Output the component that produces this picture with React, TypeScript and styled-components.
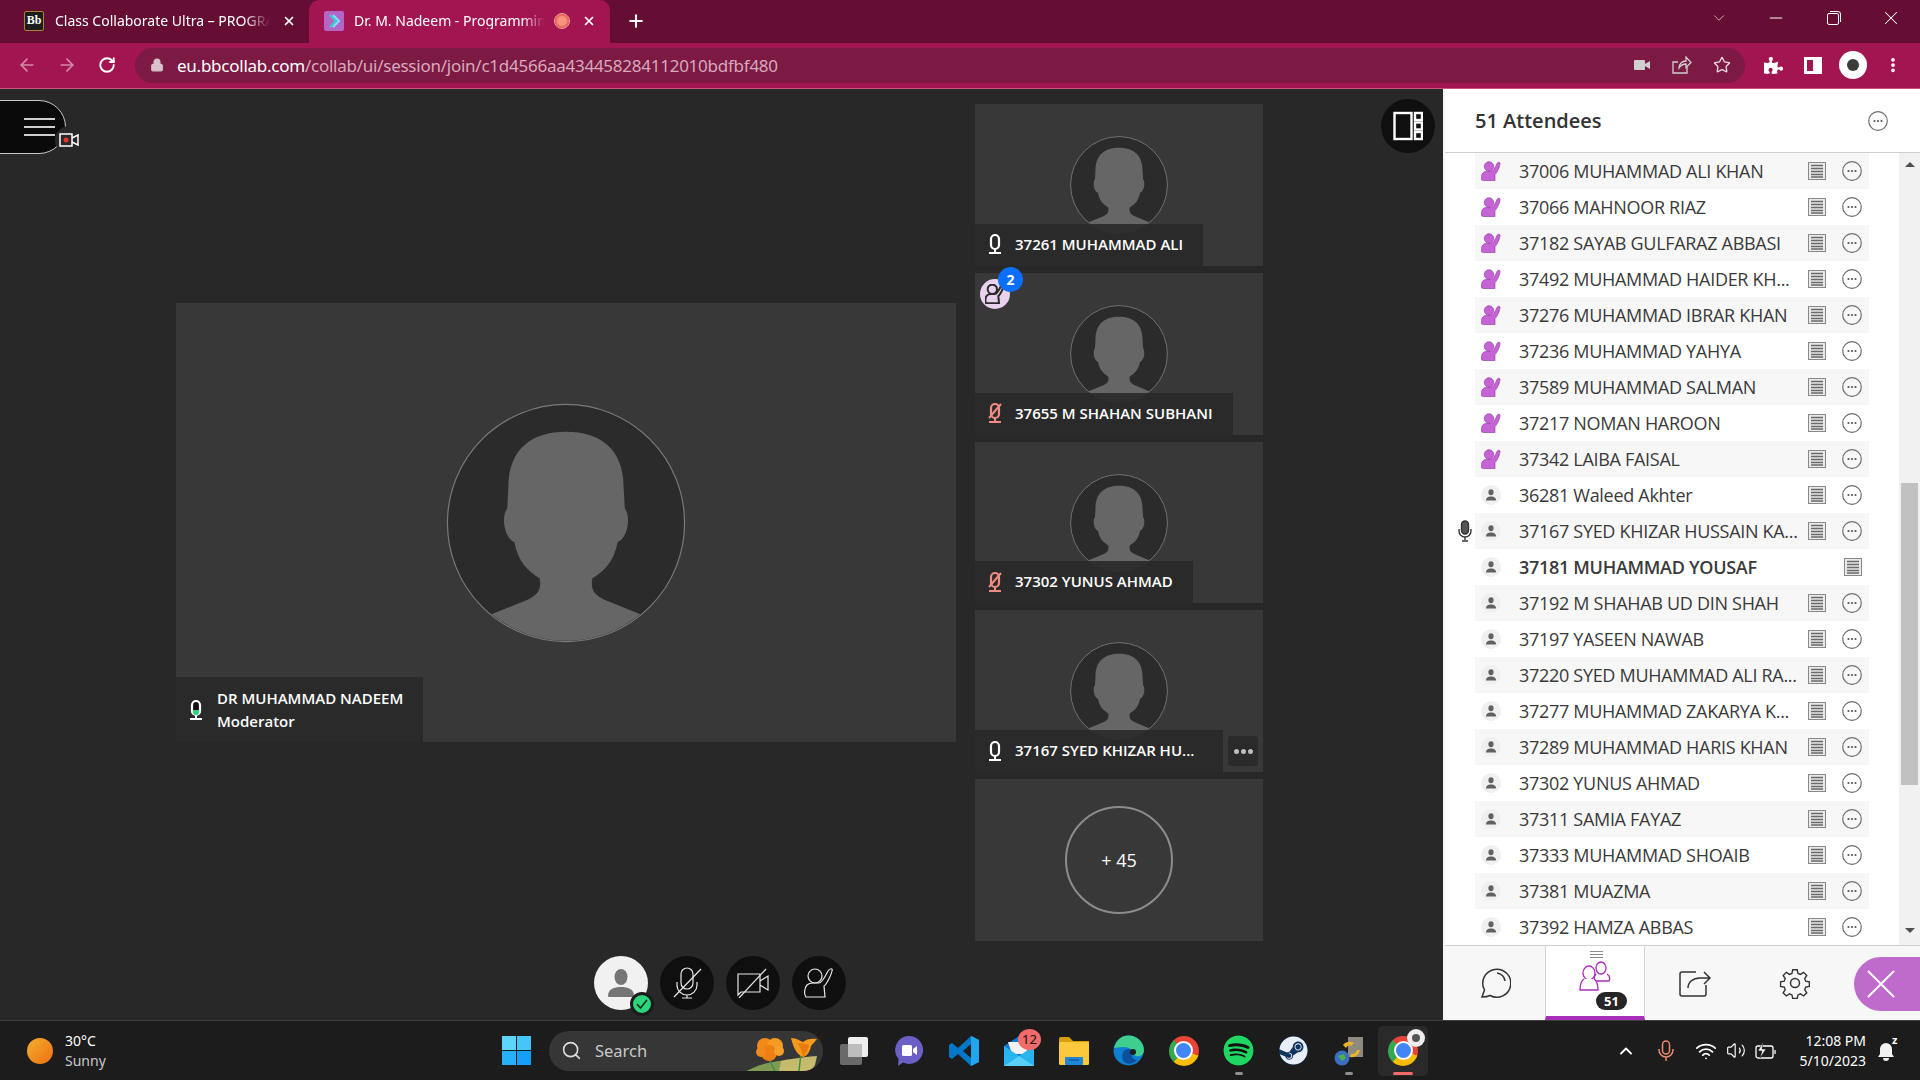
import React from 'react'
import styled, { createGlobalStyle } from 'styled-components'
import { ArrowLeft, ArrowRight, RotateCw, Lock, Star, X, Plus, Minus, ChevronDown, ChevronUp, Search, MoreVertical, Wifi, Volume2 } from 'lucide-react'
import { FaPuzzlePiece, FaSpotify, FaSteam } from 'react-icons/fa'

const GlobalStyle = createGlobalStyle`
  html, body {
    margin: 0;
    padding: 0;
    background: #282828;
    overflow: hidden;
  }
  #root {
    width: 1920px;
    height: 1080px;
  }
  * {
    box-sizing: border-box;
  }
`

const Page = styled.div`
  display: flex;
  flex-flow: column nowrap;
  width: 1920px;
  height: 1080px;
  font-family: 'Open Sans', 'Liberation Sans', sans-serif;
`

/* browser chrome */
const TabStrip = styled.div`
  display: flex;
  align-items: stretch;
  height: 43px;
  flex: none;
  padding-bottom: 0;
  background: #650d33;
  color: #fff;
  font-family: 'Noto Sans', 'Liberation Sans', sans-serif;
  font-size: 14px;
  line-height: 17px;
`

const Tab = styled.div<{ $active?: boolean }>`
  position: relative;
  display: flex;
  align-items: center;
  width: ${({ $active }) => ($active ? '301px' : '309px')};
  padding-left: ${({ $active }) => ($active ? '15px' : '24px')};
  padding-bottom: 2px;
  background: ${({ $active }) => ($active ? '#a31550' : 'transparent')};
  border-radius: 10px 10px 0 0;
`

const Favicon = styled.div<{ $kind: 'bb' | 'class' }>`
  flex: none;
  display: flex;
  align-items: center;
  justify-content: center;
  width: 20px;
  height: 20px;
  border-radius: 2px;
  font-family: 'Liberation Serif', serif;
  font-size: 12px;
  font-weight: 700;
  color: #fff;
  background: ${({ $kind }) => ($kind === 'bb' ? '#1d1d1d' : '#b565c8')};
  border: ${({ $kind }) => ($kind === 'bb' ? '1px solid #a8842c' : 'none')};
`

const TabTitle = styled.span<{ $width: number; $left: number }>`
  flex: none;
  width: ${({ $width }) => $width}px;
  margin-left: ${({ $left }) => $left}px;
  white-space: nowrap;
  mask-image: linear-gradient(to right, #000 88%, transparent);
`

const AudioDot = styled.div`
  flex: none;
  width: 14px;
  height: 14px;
  margin-left: 10px;
  border-radius: 50%;
  background: #f4947c;
  border: 2px solid #ec6a5e;
  outline: 1px solid #f4a797;
`

const TabClose = styled.div<{ $left: number }>`
  display: flex;
  margin-left: ${({ $left }) => $left}px;
`

const NewTab = styled.div`
  display: flex;
  align-items: center;
  margin-left: 16px;
  padding-bottom: 2px;
`

const WindowButtons = styled.div`
  display: flex;
  margin-left: auto;
`

const WindowButton = styled.div`
  display: flex;
  align-items: center;
  justify-content: center;
  width: 57.5px;
  height: 36px;
  color: #fff;
`

const Toolbar = styled.div`
  display: flex;
  align-items: center;
  flex: none;
  height: 46px;
  padding: 0 0 1px 7px;
  background: #a31550;
  border-bottom: 1px solid #c9567f;
`

const ToolButton = styled.div<{ $dim?: boolean }>`
  display: flex;
  align-items: center;
  justify-content: center;
  width: 40px;
  height: 36px;
  flex: none;
  color: ${({ $dim }) => ($dim ? '#d58aa8' : '#fff')};
`

const UrlBox = styled.div`
  display: flex;
  align-items: center;
  width: 1610px;
  height: 35px;
  margin: 0 8px;
  padding-left: 15px;
  padding-right: 3px;
  border-radius: 18px;
  background: #7c1a43;
  font-family: 'Noto Sans', 'Liberation Sans', sans-serif;
  font-size: 17px;
  letter-spacing: -0.25px;
`

const UrlText = styled.span`
  margin-left: 13px;
  color: #d9a9bd;
  white-space: nowrap;
  b {
    font-weight: 400;
    color: #fff;
  }
`

const UrlActions = styled.div`
  display: flex;
  margin-left: auto;
`

const ProfileDot = styled.div`
  width: 28px;
  height: 28px;
  border-radius: 50%;
  background: #fff;
  display: flex;
  align-items: center;
  justify-content: center;
  &::after {
    content: '';
    width: 12px;
    height: 12px;
    border-radius: 50%;
    background: #3c3c3c;
  }
`

const SidebarGlyph = styled.div`
  width: 18px;
  height: 17px;
  border: 3px solid #fff;
  border-right-width: 9px;
`

/* session */
const Session = styled.div`
  display: flex;
  flex: 1;
  min-height: 0;
`

const Stage = styled.div`
  position: relative;
  width: 1443px;
  flex: none;
  display: flex;
  flex-flow: column nowrap;
  padding-top: 15px;
  background: #282828;
`

const MenuButton = styled.div`
  position: absolute;
  left: -1px;
  top: 11px;
  width: 67px;
  height: 54px;
  display: flex;
  flex-flow: column nowrap;
  justify-content: center;
  align-items: flex-end;
  gap: 6px;
  padding-right: 10px;
  background: #0a0a0a;
  border: 1px solid #c8c8c8;
  border-radius: 0 27px 27px 0;
`

const MenuLine = styled.span`
  width: 31px;
  height: 2px;
  background: #cfcfcf;
`

const RecordBadge = styled.div`
  position: absolute;
  left: 55px;
  top: 37px;
  width: 28px;
  height: 28px;
  border-radius: 50%;
  background: #282828;
  display: flex;
  align-items: center;
  justify-content: center;
`

const LayoutToggle = styled.div`
  position: absolute;
  right: 8px;
  top: 10px;
  width: 54px;
  height: 54px;
  border-radius: 50%;
  background: #0f0f0f;
  display: flex;
  align-items: center;
  justify-content: center;
`

const VideoArea = styled.div`
  display: flex;
  gap: 19px;
  padding-left: 176px;
`

const MainVideo = styled.div`
  position: relative;
  width: 780px;
  height: 439px;
  margin-top: 199px;
  background: #383838;
  display: flex;
  align-items: center;
  justify-content: center;
`

const TileColumn = styled.div`
  display: flex;
  flex-flow: column nowrap;
  gap: 7px;
`

const Tile = styled.div`
  position: relative;
  width: 288px;
  height: 161.75px;
  padding-top: 32px;
  background: #383838;
  display: flex;
  justify-content: center;
`

const MoreTile = styled(Tile)`
  padding-top: 0;
  align-items: center;
`

const MoreCircle = styled.div`
  width: 108px;
  height: 108px;
  border-radius: 50%;
  border: 2px solid #8c8c8c;
  display: flex;
  align-items: center;
  justify-content: center;
  color: #fff;
  font-size: 18px;
`

const NameBar = styled.div<{ $width: number; $tall?: boolean }>`
  position: absolute;
  left: 0;
  bottom: 0;
  width: ${({ $width }) => $width}px;
  height: ${({ $tall }) => ($tall ? '65px' : '42px')};
  display: flex;
  align-items: center;
  gap: ${({ $tall }) => ($tall ? '11px' : '10px')};
  padding: 0 0 ${({ $tall }) => ($tall ? '0' : '1px')} 10px;
  background: rgba(40, 40, 40, 0.88);
  color: #fff;
  font-size: 15px;
  font-weight: 600;
  line-height: 23px;
  white-space: nowrap;
`

const TileMore = styled.div`
  position: absolute;
  right: 5px;
  bottom: 6px;
  width: 30px;
  height: 30px;
  border-radius: 3px;
  background: #2a2a2a;
  display: flex;
  align-items: center;
  justify-content: center;
  gap: 2px;
`

const TileMoreDot = styled.span`
  width: 5px;
  height: 5px;
  border-radius: 50%;
  background: #bdbdbd;
`

const HandBadge = styled.div`
  position: absolute;
  left: 5px;
  top: 6px;
  width: 30px;
  height: 30px;
  border-radius: 50%;
  background: #e8d2ee;
  display: flex;
  align-items: center;
  justify-content: center;
`

const HandCount = styled.div`
  position: absolute;
  left: 18px;
  top: -12px;
  width: 25px;
  height: 25px;
  border-radius: 50%;
  background: #0b6efd;
  color: #fff;
  font-size: 14px;
  font-weight: 700;
  display: flex;
  align-items: center;
  justify-content: center;
`

const Controls = styled.div`
  display: flex;
  justify-content: center;
  gap: 12px;
  margin-top: 15px;
  padding-right: 3px;
`

const ControlButton = styled.div`
  position: relative;
  width: 54px;
  height: 54px;
  border-radius: 50%;
  background: #0f0f0f;
  display: flex;
  align-items: center;
  justify-content: center;
`

const SelfButton = styled(ControlButton)`
  background: #f1f1f1;
`

const StatusBadge = styled.div`
  position: absolute;
  right: -6px;
  bottom: -6px;
  width: 24px;
  height: 24px;
  border-radius: 50%;
  background: #2ed47a;
  border: 3px solid #1b1b1b;
  display: flex;
  align-items: center;
  justify-content: center;
`

/* attendees panel */
const Panel = styled.div`
  flex: 1;
  display: flex;
  flex-flow: column nowrap;
  background: #fff;
  border-left: 2px solid #f4f4f4;
`

const PanelHeader = styled.div`
  flex: none;
  height: 64px;
  display: flex;
  align-items: center;
  justify-content: space-between;
  padding: 0 32px 0 30px;
  border-bottom: 1px solid #cfcfcf;
`

const PanelTitle = styled.div`
  font-size: 20px;
  font-weight: 600;
  color: #333;
`

const PanelBody = styled.div`
  flex: 1;
  display: flex;
  min-height: 0;
  justify-content: space-between;
  padding-left: 30px;
`

const AttendeeList = styled.div`
  width: 394px;
`

const Row = styled.div<{ $shade: boolean }>`
  position: relative;
  height: 36px;
  display: flex;
  align-items: center;
  padding: 0 7px 0 6px;
  background: ${({ $shade }) => ($shade ? '#f7f7f7' : '#fff')};
`

const RoleCircle = styled.div`
  width: 20px;
  height: 20px;
  flex: none;
  border-radius: 50%;
  background: #f0f0f0;
  display: flex;
  align-items: center;
  justify-content: center;
`

const RaisedHand = styled.div`
  width: 20px;
  height: 20px;
  flex: none;
`

const SpeakingMic = styled.div`
  position: absolute;
  left: -17px;
  top: 7px;
`

const AttendeeName = styled.div<{ $bold?: boolean }>`
  flex: 1;
  margin-left: 18px;
  font-size: 18px;
  font-weight: ${({ $bold }) => ($bold ? 600 : 400)};
  color: #3a3a3a;
  white-space: nowrap;
  letter-spacing: -0.3px;
`

const RowActions = styled.div`
  display: flex;
  align-items: center;
  gap: 16px;
`

const Scrollbar = styled.div`
  width: 21px;
  flex: none;
  background: #f1f1f1;
  display: flex;
  flex-flow: column nowrap;
  align-items: center;
  padding-top: 9px;
`

const ScrollThumb = styled.div`
  width: 17px;
  height: 302px;
  margin-top: 316px;
  background: #c1c1c1;
`

const ArrowUp = styled.div`
  width: 0;
  height: 0;
  border-left: 5px solid transparent;
  border-right: 5px solid transparent;
  border-bottom: 5px solid #505050;
`

const ArrowDown = styled.div`
  width: 0;
  height: 0;
  margin-top: 143px;
  border-left: 5px solid transparent;
  border-right: 5px solid transparent;
  border-top: 5px solid #505050;
`

const PanelTabs = styled.div`
  flex: none;
  height: 75px;
  display: flex;
  background: #f7f7f7;
  border-top: 1px solid #cfcfcf;
`

const PanelTab = styled.div<{ $active?: boolean }>`
  position: relative;
  width: 100px;
  display: flex;
  align-items: center;
  justify-content: center;
  background: ${({ $active }) => ($active ? '#fff' : 'transparent')};
  border-left: ${({ $active }) => ($active ? '1px solid #d4d4d4' : 'none')};
  border-right: ${({ $active }) => ($active ? '1px solid #d4d4d4' : 'none')};
  border-bottom: ${({ $active }) => ($active ? '4px solid #a92ebc' : 'none')};
`

const DragHandle = styled.div`
  position: absolute;
  left: 44px;
  top: 5px;
  width: 13px;
  height: 7px;
  border-top: 1px solid #8c8c8c;
  border-bottom: 1px solid #8c8c8c;
  &::after {
    content: '';
    display: block;
    margin-top: 2px;
    height: 1px;
    background: #8c8c8c;
  }
`

const CountBadge = styled.div`
  position: absolute;
  left: 50px;
  top: 46px;
  width: 31px;
  height: 18px;
  border-radius: 9px;
  background: #262626;
  color: #fff;
  font-size: 13px;
  font-weight: 700;
  display: flex;
  align-items: center;
  justify-content: center;
`

const ClosePanel = styled.div`
  width: 66px;
  height: 54px;
  margin: 11px 0 0 auto;
  padding-right: 12px;
  background: #bf6bcc;
  border-radius: 27px 0 0 27px;
  display: flex;
  align-items: center;
  justify-content: center;
  color: #fff;
`

/* taskbar */
const Taskbar = styled.div`
  flex: none;
  height: 60px;
  display: flex;
  align-items: center;
  background: #1c1c1c;
  border-top: 1px solid #3d3d3d;
  color: #fff;
  font-family: 'Noto Sans', 'Liberation Sans', sans-serif;
`

const Weather = styled.div`
  width: 502px;
  flex: none;
  display: flex;
  align-items: center;
  padding-left: 27px;
`

const Sun = styled.div`
  width: 26px;
  height: 26px;
  border-radius: 50%;
  background: linear-gradient(135deg, #f3b02c, #ee6f12);
`

const WeatherText = styled.div`
  margin-left: 12px;
  font-size: 14px;
  line-height: 20px;
  span {
    display: block;
    color: #c9c9c9;
  }
`

const StartGrid = styled.div`
  width: 29px;
  height: 29px;
  flex: none;
  display: grid;
  grid-template-columns: 1fr 1fr;
  gap: 1px;
`

const StartPane = styled.span<{ $c: string }>`
  background: ${({ $c }) => $c};
`

const SearchPill = styled.div`
  position: relative;
  width: 274px;
  height: 40px;
  margin-left: 18px;
  margin-right: 3px;
  flex: none;
  display: flex;
  align-items: center;
  gap: 13px;
  padding-left: 12px;
  border-radius: 20px;
  background: #363636;
  color: #c9c9c9;
  font-size: 16.5px;
  overflow: hidden;
`

const Flowers = styled.svg`
  position: absolute;
  right: 0;
  bottom: 0;
`

const AppSlot = styled.div`
  position: relative;
  width: 55px;
  height: 50px;
  flex: none;
  display: flex;
  align-items: center;
  justify-content: center;
`

const ActiveSlot = styled(AppSlot)`
  width: 50px;
  margin-left: 2px;
  background: #2a2a2a;
  border-radius: 5px;
`

const RunningMark = styled.span<{ $active?: boolean }>`
  position: absolute;
  bottom: 1px;
  left: 50%;
  transform: translateX(-50%);
  height: 3px;
  width: ${({ $active }) => ($active ? '20px' : '8px')};
  border-radius: 2px;
  background: ${({ $active }) => ($active ? '#f26a6a' : '#8f8f8f')};
`

const MailCount = styled.span`
  position: absolute;
  right: 5px;
  top: 3px;
  width: 23px;
  height: 21px;
  border-radius: 50%;
  background: #f26a6a;
  color: #111;
  font-size: 13px;
  display: flex;
  align-items: center;
  justify-content: center;
`

const ChromeLogo = styled.div`
  position: relative;
  width: 30px;
  height: 30px;
  border-radius: 50%;
  background: conic-gradient(#ea4335 0 30%, #fbbc04 30% 62%, #34a853 62% 88%, #ea4335 88%);
  display: flex;
  align-items: center;
  justify-content: center;
  &::after {
    content: '';
    width: 15px;
    height: 15px;
    border-radius: 50%;
    background: #4285f4;
    border: 2px solid #fff;
  }
`

const ChromeBadge = styled.div`
  position: absolute;
  right: 3px;
  top: 3px;
  width: 18px;
  height: 18px;
  border-radius: 50%;
  background: #eee;
  display: flex;
  align-items: center;
  justify-content: center;
  &::after {
    content: '';
    width: 8px;
    height: 8px;
    border-radius: 50%;
    background: #555;
  }
`

const Tray = styled.div`
  display: flex;
  align-items: center;
  margin-left: auto;
  color: #fff;
`

const TrayIcon = styled.div<{ $w: number }>`
  width: ${({ $w }) => $w}px;
  display: flex;
  justify-content: center;
`

const Clock = styled.div`
  width: 72px;
  margin-left: 8px;
  text-align: right;
  font-size: 14px;
  line-height: 20px;
  white-space: nowrap;
`

const BellBox = styled.div`
  position: relative;
  width: 54px;
  display: flex;
  justify-content: center;
  padding-right: 12px;
`

const BellSnooze = styled.span`
  position: absolute;
  left: 26px;
  top: -6px;
  font-size: 11px;
  font-weight: 700;
  line-height: 12px;
`

function Avatar({ size }: { size: number }) {
  return (
    <svg width={size} height={size} viewBox="0 0 100 100">
      <circle cx="50" cy="50" r="49.4" fill="#2b2b2b" stroke="#7a7a7a" strokeWidth={size > 150 ? 0.5 : 0.9} />
      <path
        fill="#666"
        d="M26 35C26 19 36 12 50 12C64 12 74 19 74 35L74.500 44C77 47 76 56 71.500 58C70 66 66 70 61 73C60 78 62 80 66 82L81 88A49 49 0 0 1 19 88L34 82C38 80 40 78 39 73C34 70 30 66 28.500 58C24 56 23 47 25.500 44Z"
      />
    </svg>
  )
}

function BarMic({ muted, level }: { muted?: boolean; level?: boolean }) {
  const c = muted ? '#f28b82' : '#fff'
  return (
    <svg width="20" height="22" viewBox="0 0 20 22" fill="none" stroke={c} strokeWidth="2.200">
      <rect x="6" y="2" width="8" height="14" rx="4" fill={level ? '#111' : 'none'} />
      {level && <path d="M7 11h6v2a3 3 0 0 1-6 0z" fill="#2ed47a" stroke="none" />}
      <path d="M10 16v3M4 20h12" strokeWidth="2" />
      {muted && <path d="M4 16L16 2" strokeWidth="2" />}
    </svg>
  )
}

function ListHand() {
  return (
    <svg width="20" height="20" viewBox="0 0 20 20" fill="#c663d6" stroke="#9c3cad" strokeWidth="0.700">
      <circle cx="8" cy="5.500" r="4.700" />
      <path d="M.5 18c-.5-3 .5-7 4-7.500h5c2.500 0 4.500-3.500 6.500-8 1-2 3.500-1.500 3 .5-.6 3.500-3 9-5 10.500V19.500H2.500C1 19.500.7 19 .5 18z" />
    </svg>
  )
}

function ListPerson() {
  return (
    <svg width="12" height="12" viewBox="0 0 12 12" fill="#616161">
      <ellipse cx="6" cy="3.200" rx="2.600" ry="3" />
      <path d="M1 11.500c0-3 2-4 5-4s5 1 5 4z" />
    </svg>
  )
}

function NotesIcon() {
  return (
    <svg width="18" height="18" viewBox="0 0 18 18">
      <rect x="0.500" y="0.500" width="17" height="17" fill="#e9e9e9" stroke="#8a8a8a" />
      <path d="M3 3.500h12M3 6.500h12M3 9.500h12M3 12.500h12M3 15h12" stroke="#6a6a6a" strokeWidth="1.500" />
    </svg>
  )
}

function DotsCircle() {
  return (
    <svg width="20" height="20" viewBox="0 0 20 20">
      <circle cx="10" cy="10" r="9.300" fill="none" stroke="#6e6e6e" strokeWidth="1.200" />
      <circle cx="6.500" cy="10" r="1.100" fill="#555" />
      <circle cx="10" cy="10" r="1.100" fill="#555" />
      <circle cx="13.500" cy="10" r="1.100" fill="#555" />
    </svg>
  )
}

function ControlMic() {
  return (
    <svg width="30" height="32" viewBox="0 0 30 32" fill="none" stroke="#e8e8e8" strokeWidth="1.200">
      <rect x="9" y="1" width="12" height="21" rx="6" />
      <path d="M5 15v3a10 10 0 0 0 20 0v-3M15 28v3M10 31h10" />
      <path d="M2 30L29 2" />
    </svg>
  )
}

function ControlCamera() {
  return (
    <svg width="32" height="30" viewBox="0 0 32 30" fill="none" stroke="#e8e8e8" strokeWidth="1.200">
      <path d="M1 6h22v18H4l-3 3zM23 13l8-5v14l-8-5" />
      <path d="M2 30L29 1" />
    </svg>
  )
}

function ControlHand({ size = 30, color = '#e8e8e8', sw = 1.200 }: { size?: number; color?: string; sw?: number }) {
  return (
    <svg width={size} height={size} viewBox="0 0 30 30" fill="none" stroke={color} strokeWidth={sw}>
      <circle cx="11" cy="8" r="7" />
      <path d="M2 29c-2-2-2-9 1-12 2-2 4-2 6-2h6c3 0 6-6 9-12 2-3 5-3 4 0-1 5-6 14-8 15l1 11z" />
    </svg>
  )
}

const names: { name: string; hand?: boolean; mic?: boolean; bold?: boolean }[] = [
  { name: '37006 MUHAMMAD ALI KHAN', hand: true },
  { name: '37066 MAHNOOR RIAZ', hand: true },
  { name: '37182 SAYAB GULFARAZ ABBASI', hand: true },
  { name: '37492 MUHAMMAD HAIDER KH...', hand: true },
  { name: '37276 MUHAMMAD IBRAR KHAN', hand: true },
  { name: '37236 MUHAMMAD YAHYA', hand: true },
  { name: '37589 MUHAMMAD SALMAN', hand: true },
  { name: '37217 NOMAN HAROON', hand: true },
  { name: '37342 LAIBA FAISAL', hand: true },
  { name: '36281 Waleed Akhter' },
  { name: '37167 SYED KHIZAR HUSSAIN KA...', mic: true },
  { name: '37181 MUHAMMAD YOUSAF', bold: true },
  { name: '37192 M SHAHAB UD DIN SHAH' },
  { name: '37197 YASEEN NAWAB' },
  { name: '37220 SYED MUHAMMAD ALI RA...' },
  { name: '37277 MUHAMMAD ZAKARYA K...' },
  { name: '37289 MUHAMMAD HARIS KHAN' },
  { name: '37302 YUNUS AHMAD' },
  { name: '37311 SAMIA FAYAZ' },
  { name: '37333 MUHAMMAD SHOAIB' },
  { name: '37381 MUAZMA' },
  { name: '37392 HAMZA ABBAS' },
]

const tiles = [
  { name: '37261 MUHAMMAD ALI', width: 228 },
  { name: '37655 M SHAHAN SUBHANI', width: 258, muted: true, hands: true },
  { name: '37302 YUNUS AHMAD', width: 218, muted: true },
  { name: '37167 SYED KHIZAR HU...', width: 248, more: true },
]

export default function App() {
  return (
    <Page>
      <GlobalStyle />
      <TabStrip>
        <Tab>
          <Favicon $kind="bb">Bb</Favicon>
          <TabTitle $width={215} $left={11}>Class Collaborate Ultra – PROGRA</TabTitle>
          <TabClose $left={12}>
            <X size={14} strokeWidth={3} />
          </TabClose>
        </Tab>
        <Tab $active>
          <Favicon $kind="class">
            <svg width="12" height="14" viewBox="0 0 12 14" fill="none" strokeWidth="2">
              <path d="M2 1l6 6-6 6" stroke="#35d0c0" />
              <path d="M5 1l6 6-6 6" stroke="#7de0ff" />
            </svg>
          </Favicon>
          <TabTitle $width={191} $left={10}>Dr. M. Nadeem - Programmin</TabTitle>
          <AudioDot />
          <TabClose $left={13}>
            <X size={14} strokeWidth={3} />
          </TabClose>
        </Tab>
        <NewTab>
          <Plus size={20} strokeWidth={2.5} />
        </NewTab>
        <WindowButtons>
          <WindowButton>
            <ChevronDown size={18} strokeWidth={1} color="#eadbe1" />
          </WindowButton>
          <WindowButton>
            <Minus size={20} strokeWidth={1.2} />
          </WindowButton>
          <WindowButton>
            <svg width="14" height="14" viewBox="0 0 14 14" fill="none" stroke="currentColor">
              <rect x="0.500" y="2.500" width="11" height="11" rx="1.500" />
              <path d="M3 .5h8a2.500 2.500 0 0 1 2.500 2.500v8" />
            </svg>
          </WindowButton>
          <WindowButton>
            <X size={22} strokeWidth={1.1} />
          </WindowButton>
        </WindowButtons>
      </TabStrip>

      <Toolbar>
        <ToolButton $dim>
          <ArrowLeft size={20} />
        </ToolButton>
        <ToolButton $dim>
          <ArrowRight size={20} />
        </ToolButton>
        <ToolButton>
          <RotateCw size={18} strokeWidth={2.5} />
        </ToolButton>
        <UrlBox>
          <Lock size={14} color="#d9c2cc" fill="#d9c2cc" />
          <UrlText>
            <b>eu.bbcollab.com</b>/collab/ui/session/join/c1d4566aa434458284112010bdfbf480
          </UrlText>
          <UrlActions>
            <ToolButton>
              <svg width="16" height="10" viewBox="0 0 16 10" fill="#cfcfcf">
                <rect width="11" height="10" rx="1" />
                <path d="M11 4l5-3v8l-5-3z" />
              </svg>
            </ToolButton>
            <ToolButton>
              <svg width="20" height="18" viewBox="0 0 20 18" fill="none" stroke="#cfcfcf" strokeWidth="1.300">
                <path d="M15 10v7H1V6h5M7 12c0-4 3-7 7-7V1l5 5.500-5 5V8c-3 0-5 1-7 4z" />
              </svg>
            </ToolButton>
            <ToolButton>
              <Star size={18} color="#eadbe1" strokeWidth={1.8} />
            </ToolButton>
          </UrlActions>
        </UrlBox>
        <ToolButton>
          <FaPuzzlePiece size={19} />
        </ToolButton>
        <ToolButton>
          <SidebarGlyph />
        </ToolButton>
        <ToolButton>
          <ProfileDot />
        </ToolButton>
        <ToolButton>
          <MoreVertical size={18} strokeWidth={3} />
        </ToolButton>
      </Toolbar>

      <Session>
        <Stage>
          <MenuButton>
            <MenuLine />
            <MenuLine />
            <MenuLine />
          </MenuButton>
          <RecordBadge>
            <svg width="20" height="14" viewBox="0 0 20 14" fill="none" stroke="#fff" strokeWidth="1.500">
              <rect x="1" y="1" width="12" height="12" />
              <circle cx="7" cy="7" r="2.500" fill="#e5332a" stroke="none" />
              <path d="M13 5l6-3v10l-6-3" />
            </svg>
          </RecordBadge>
          <LayoutToggle>
            <svg width="30" height="30" viewBox="0 0 30 30" fill="none" stroke="#fff" strokeWidth="2.400">
              <rect x="1.500" y="2" width="17" height="26" />
              <rect x="22" y="2" width="7" height="7" />
              <rect x="22" y="11.500" width="7" height="7" />
              <rect x="22" y="21" width="7" height="7" />
            </svg>
          </LayoutToggle>

          <VideoArea>
            <MainVideo>
              <Avatar size={240} />
              <NameBar $width={247} $tall>
                <BarMic level />
                <div>
                  DR MUHAMMAD NADEEM
                  <br />
                  Moderator
                </div>
              </NameBar>
            </MainVideo>
            <TileColumn>
              {tiles.map((t) => (
                <Tile key={t.name}>
                  <Avatar size={98} />
                  <NameBar $width={t.width}>
                    <BarMic muted={t.muted} />
                    {t.name}
                  </NameBar>
                  {t.more && (
                    <TileMore>
                      <TileMoreDot />
                      <TileMoreDot />
                      <TileMoreDot />
                    </TileMore>
                  )}
                  {t.hands && (
                    <HandBadge>
                      <ControlHand size={20} color="#2a2a2a" sw={3} />
                      <HandCount>2</HandCount>
                    </HandBadge>
                  )}
                </Tile>
              ))}
              <MoreTile>
                <MoreCircle>+ 45</MoreCircle>
              </MoreTile>
            </TileColumn>
          </VideoArea>

          <Controls>
            <SelfButton>
              <svg width="32" height="32" viewBox="0 0 32 32" fill="#757575">
                <ellipse cx="16" cy="10" rx="6.500" ry="8" />
                <path d="M3 29c0-7 6-9 13-9s13 2 13 9c0 1-1 1-2 1H5c-1 0-2 0-2-1z" />
              </svg>
              <StatusBadge>
                <svg width="12" height="10" viewBox="0 0 12 10" fill="none" stroke="#0d2a1a" strokeWidth="1.500">
                  <path d="M1 5l3.500 4L11 1" />
                </svg>
              </StatusBadge>
            </SelfButton>
            <ControlButton>
              <ControlMic />
            </ControlButton>
            <ControlButton>
              <ControlCamera />
            </ControlButton>
            <ControlButton>
              <ControlHand />
            </ControlButton>
          </Controls>
        </Stage>

        <Panel>
          <PanelHeader>
            <PanelTitle>51 Attendees</PanelTitle>
            <DotsCircle />
          </PanelHeader>
          <PanelBody>
            <AttendeeList>
              {names.map((a, i) => (
                <Row key={a.name} $shade={i % 2 === 0}>
                  {a.mic && (
                    <SpeakingMic>
                      <svg width="14" height="22" viewBox="0 0 14 22" fill="none" stroke="#333" strokeWidth="1.400">
                        <rect x="3.500" y="1" width="7" height="13" rx="3.500" fill="#555" />
                        <path d="M1 9v2a6 6 0 0 0 12 0V9M7 17v3M4 21h6" />
                      </svg>
                    </SpeakingMic>
                  )}
                  {a.hand ? (
                    <RaisedHand>
                      <ListHand />
                    </RaisedHand>
                  ) : (
                    <RoleCircle>
                      <ListPerson />
                    </RoleCircle>
                  )}
                  <AttendeeName $bold={a.bold}>{a.name}</AttendeeName>
                  <RowActions>
                    <NotesIcon />
                    {!a.bold && <DotsCircle />}
                  </RowActions>
                </Row>
              ))}
            </AttendeeList>
            <Scrollbar>
              <ArrowUp />
              <ScrollThumb />
              <ArrowDown />
            </Scrollbar>
          </PanelBody>
          <PanelTabs>
            <PanelTab>
              <svg width="32" height="32" viewBox="0 0 32 32" fill="none" stroke="#333" strokeWidth="1.500">
                <path d="M3 30l2.500-7A14 14 0 1 1 11 28.500c-2 1-5 1.500-8 1.500z" />
                <path d="M18 6a9 9 0 0 1 8 8" />
              </svg>
            </PanelTab>
            <PanelTab $active>
              <DragHandle />
              <svg width="32" height="32" viewBox="0 0 32 32" fill="none" stroke="#a92ebc" strokeWidth="1.300" style={{ marginTop: -8 }}>
                <ellipse cx="22" cy="7" rx="5" ry="6" />
                <path d="M17 13c-2 2-2 5-1 7h14c1-2 1-5-2-7" />
                <ellipse cx="10" cy="12" rx="6" ry="7" fill="#fff" />
                <path d="M5 18c-3 2-4 6-4 11h18c0-5-1-9-4-11" fill="#fff" />
              </svg>
              <CountBadge>51</CountBadge>
            </PanelTab>
            <PanelTab>
              <svg width="32" height="28" viewBox="0 0 32 28" fill="none" stroke="#333" strokeWidth="1.500">
                <path d="M17 3H3a2 2 0 0 0-2 2v20a2 2 0 0 0 2 2h22a2 2 0 0 0 2-2v-9" />
                <path d="M9 19c0-6 5-10 12-10h10M25 3l6 6-6 6" />
              </svg>
            </PanelTab>
            <PanelTab>
              <svg width="32" height="32" viewBox="0 0 32 32" fill="none" stroke="#333" strokeWidth="1.500">
                <circle cx="16" cy="16" r="4.500" />
                <path d="M13.500 1.500h5l.8 4 2.700 1.100 3.500-2.300 3.500 3.500-2.300 3.500 1.100 2.700 4 .8v5l-4 .8-1.100 2.700 2.300 3.500-3.500 3.500-3.500-2.300-2.700 1.100-.8 4h-5l-.8-4-2.700-1.100-3.500 2.300-3.500-3.500 2.300-3.500-1.100-2.700-4-.8v-5l4-.8 1.100-2.700-2.300-3.500 3.500-3.500 3.500 2.300 2.700-1.100z" transform="translate(1.400 1.400) scale(.91)" />
              </svg>
            </PanelTab>
            <ClosePanel>
              <X size={50} strokeWidth={0.9} />
            </ClosePanel>
          </PanelTabs>
        </Panel>
      </Session>

      <Taskbar>
        <Weather>
          <Sun />
          <WeatherText>
            30°C
            <span>Sunny</span>
          </WeatherText>
        </Weather>
        <StartGrid>
          <StartPane $c="#5fd4fb" />
          <StartPane $c="#45c6fb" />
          <StartPane $c="#26b0fa" />
          <StartPane $c="#14a0f8" />
        </StartGrid>
        <SearchPill>
          <Search size={21} strokeWidth={1.8} color="#ddd" />
          Search
          <Flowers width="84" height="40" viewBox="0 0 84 40">
            <path d="M8 40C26 31 56 27 78 25L76 34C74 38 70 40 66 40z" fill="#c4bb6c" />
            <path d="M8 40C18 34 30 31 42 30L40 40z" fill="#7f9a52" />
            <path d="M30 28l6 12M62 22l-2 18" stroke="#3f8f4a" strokeWidth="1.500" fill="none" />
            <g fill="#f28a1a">
              <circle cx="26" cy="15" r="8" />
              <circle cx="36" cy="15" r="8" fill="#f59a24" />
              <circle cx="30" cy="22" r="8" fill="#ee7f12" />
              <circle cx="40" cy="20" r="5" fill="#f4a12c" />
              <circle cx="22" cy="21" r="5" />
            </g>
            <path d="M52 7c6 0 9 3 12 4 3-3 9-4 14-3l-6 7c-1 6-4 10-8 11-6-2-10-10-12-19z" fill="#f59a1c" />
            <path d="M58 12c3 3 5 8 6 14 3-3 5-8 6-12-3-1-8-2-12-2z" fill="#e87d0e" />
          </Flowers>
        </SearchPill>
        <AppSlot>
          <svg width="30" height="30" viewBox="0 0 30 30">
            <rect x="1" y="8" width="22" height="21" rx="2" fill="#6a6a6a" />
            <rect x="9" y="1" width="20" height="20" rx="2" fill="#eeeeee" />
            <rect x="9" y="8" width="14" height="13" fill="#bdbdbd" />
          </svg>
        </AppSlot>
        <AppSlot>
          <svg width="30" height="32" viewBox="0 0 30 32">
            <path d="M15 1a14 14 0 1 1-6 26.600L4 31l.5-7A14 14 0 0 1 15 1z" fill="#6a5fc4" />
            <rect x="8" y="10" width="10" height="11" rx="1.500" fill="#fff" />
            <path d="M19 14l4-3v9l-4-3z" fill="#fff" />
          </svg>
        </AppSlot>
        <AppSlot>
          <svg width="30" height="32" viewBox="0 0 30 32">
            <path d="M22 1l8 4v22l-8 4L9 19 3 24 0 22V10l3-2 6 5z" fill="#0078c8" />
            <path d="M22 1l8 4v22l-8 4z" fill="#23a4ee" />
            <path d="M22 9l-8 7 8 7z" fill="#1c1c1c" />
          </svg>
        </AppSlot>
        <AppSlot>
          <svg width="30" height="30" viewBox="0 0 30 30">
            <path d="M0 10L15 0l15 10v20H0z" fill="#0f78d4" />
            <path d="M4 6h22l-4 12H8z" fill="#f2f2f2" />
            <path d="M0 10l15 10 15-10v20H0z" fill="#28b4ee" />
            <path d="M0 30l15-10 15 10z" fill="#58d0f7" />
          </svg>
          <MailCount>12</MailCount>
        </AppSlot>
        <AppSlot>
          <svg width="30" height="28" viewBox="0 0 30 28">
            <path d="M0 2a2 2 0 0 1 2-2h8l4 4h16v6H0z" fill="#d99e0b" />
            <rect y="5" width="30" height="23" rx="1.500" fill="#fcc93d" />
            <rect x="6" y="20" width="18" height="8" rx="1" fill="#1f86d8" />
            <path d="M10 23h10" stroke="#0d4a80" />
          </svg>
        </AppSlot>
        <AppSlot>
          <svg width="31" height="31" viewBox="0 0 31 31">
            <circle cx="15.500" cy="15.500" r="15" fill="#0e7fd1" />
            <path d="M1 13C3 5 9 .5 15.500.5 24 .5 31 7 31 15c0 5-4 7-8 6-4-1-2-6-7-8-6-2-12 0-15 0z" fill="#3ecf8e" />
            <path d="M12 15c3-2 8-1 9 3-4 1-3 6 3 7-3 3-7 5-11 3-5-2-5-10-1-13z" fill="#0b4f9e" />
            <circle cx="20" cy="17" r="3" fill="#1c1c1c" />
          </svg>
        </AppSlot>
        <AppSlot>
          <ChromeLogo />
        </AppSlot>
        <AppSlot>
          <FaSpotify size={31} color="#1ed760" style={{ background: '#111', borderRadius: '50%' }} />
          <RunningMark />
        </AppSlot>
        <AppSlot>
          <FaSteam size={29} color="#e8eef5" style={{ background: '#12355f', borderRadius: '50%' }} />
        </AppSlot>
        <AppSlot>
          <svg width="30" height="30" viewBox="0 0 30 30">
            <rect x="14" y="1" width="15" height="20" fill="#8f8a80" />
            <circle cx="8" cy="22" r="7.500" fill="#3a6fc0" />
            <path d="M4 20l6-2 2 4-4 3z" fill="#4faf4a" />
            <path d="M9 9c3-4 8-4 11-2l-3 3c-2-1-4 0-5 2zM26 14c-1 5-5 8-10 7l1-3c3 0 5-1 6-4z" fill="#e8b22e" />
          </svg>
          <RunningMark />
        </AppSlot>
        <ActiveSlot>
          <ChromeLogo />
          <ChromeBadge />
          <RunningMark $active />
        </ActiveSlot>

        <Tray>
          <TrayIcon $w={40}>
            <ChevronUp size={20} strokeWidth={2.2} />
          </TrayIcon>
          <TrayIcon $w={40}>
            <svg width="16" height="22" viewBox="0 0 16 22" fill="none" stroke="#ea8a6e" strokeWidth="1.500">
              <rect x="4.500" y="1" width="7" height="13" rx="3.500" />
              <path d="M1 9v1a7 7 0 0 0 14 0V9M8 17v4" />
            </svg>
          </TrayIcon>
          <TrayIcon $w={40}>
            <Wifi size={22} />
          </TrayIcon>
          <TrayIcon $w={20}>
            <Volume2 size={21} strokeWidth={1.4} />
          </TrayIcon>
          <TrayIcon $w={40}>
            <svg width="22" height="18" viewBox="0 0 22 18" fill="none" stroke="#fff" strokeWidth="1.300">
              <rect x="1" y="4" width="17" height="12" rx="2" />
              <path d="M20 8v4" />
              <path d="M8 0L3 9h4l-2 7 6-9H7z" fill="#fff" stroke="#1c1c1c" strokeWidth="0.600" />
            </svg>
          </TrayIcon>
          <Clock>
            12:08 PM
            <br />
            5/10/2023
          </Clock>
          <BellBox>
            <svg width="18" height="22" viewBox="0 0 18 22" fill="#f2f2f2">
              <path d="M8 3a6 6 0 0 1 6 6v5l2 3H0l2-3V9a6 6 0 0 1 6-6zM5 18h6a3 3 0 0 1-6 0z" />
            </svg>
            <BellSnooze>z</BellSnooze>
          </BellBox>
        </Tray>
      </Taskbar>
    </Page>
  )
}
